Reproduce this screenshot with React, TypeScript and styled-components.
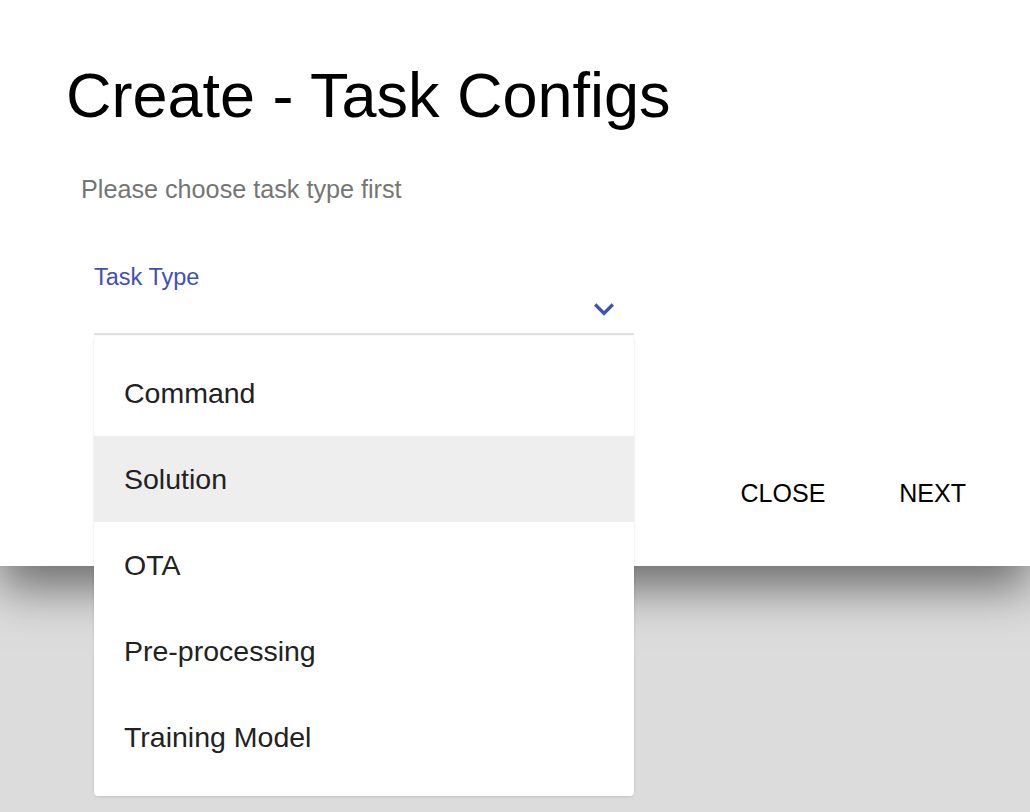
import React from 'react';
import styled, { createGlobalStyle } from 'styled-components';

const GlobalStyle = createGlobalStyle`
  html, body {
    margin: 0;
    padding: 0;
    background: #dcdcdc;
    font-family: "Liberation Sans", Arial, Helvetica, sans-serif;
  }
`;

const Page = styled.div`
  min-height: 812px;
  overflow: hidden;
`;

const Dialog = styled.div`
  background: #fff;
  padding: 0 46px 49px 66px;
  box-shadow: 0 22px 44px rgba(0, 0, 0, 0.5);
`;

const Title = styled.h2`
  margin: 0;
  padding-top: 58px;
  font-size: 63px;
  line-height: 74px;
  font-weight: 400;
  color: #000;
`;

const Hint = styled.p`
  margin: 42px 0 0 15px;
  font-size: 25.2px;
  line-height: 30px;
  color: #757575;
`;

const Field = styled.div`
  position: relative;
  width: 540px;
  margin: 59px 0 0 28px;
`;

const Label = styled.label`
  display: block;
  font-size: 23.5px;
  line-height: 28px;
  color: #3f51b5;
`;

const SelectRow = styled.div`
  height: 36px;
  padding: 0 10px 6px 0;
  display: flex;
  justify-content: flex-end;
  align-items: center;
  border-bottom: 2px solid #e0e0e0;
  color: #3f51b5;
`;

const Menu = styled.ul`
  position: absolute;
  top: calc(100% + 1px);
  left: 0;
  right: 0;
  margin: 0;
  padding: 14px 0 16px;
  list-style: none;
  background: #fff;
  border-radius: 4px;
  box-shadow: 0 1px 3px rgba(0, 0, 0, 0.12);
  z-index: 2;
`;

const Item = styled.li<{ $active?: boolean }>`
  height: 86px;
  padding-left: 30px;
  display: flex;
  align-items: center;
  font-size: 28.5px;
  color: #222;
  background: ${(p) => (p.$active ? '#eeeeee' : 'transparent')};
`;

const Actions = styled.div`
  margin-top: 134px;
  display: flex;
  justify-content: flex-end;
  gap: 38px;
`;

const Button = styled.button`
  height: 48px;
  padding: 0 18px;
  border: 0;
  background: none;
  font-family: inherit;
  font-size: 25px;
  color: #000;
  text-transform: uppercase;
  cursor: pointer;
`;

const types = ['Command', 'Solution', 'OTA', 'Pre-processing', 'Training Model'];

const Chevron = () => (
  <svg width="40" height="40" viewBox="0 0 24 24" fill="currentColor">
    <path d="M16.59 8.59 12 13.17 7.41 8.59 6 10l6 6 6-6z" />
  </svg>
);

export default function App() {
  return (
    <Page>
      <GlobalStyle />
      <Dialog>
        <Title>Create - Task Configs</Title>
        <Hint>Please choose task type first</Hint>
        <Field>
          <Label>Task Type</Label>
          <SelectRow>
            <Chevron />
          </SelectRow>
          <Menu>
            {types.map((t) => (
              <Item key={t} $active={t === 'Solution'}>
                {t}
              </Item>
            ))}
          </Menu>
        </Field>
        <Actions>
          <Button>Close</Button>
          <Button>Next</Button>
        </Actions>
      </Dialog>
    </Page>
  );
}
